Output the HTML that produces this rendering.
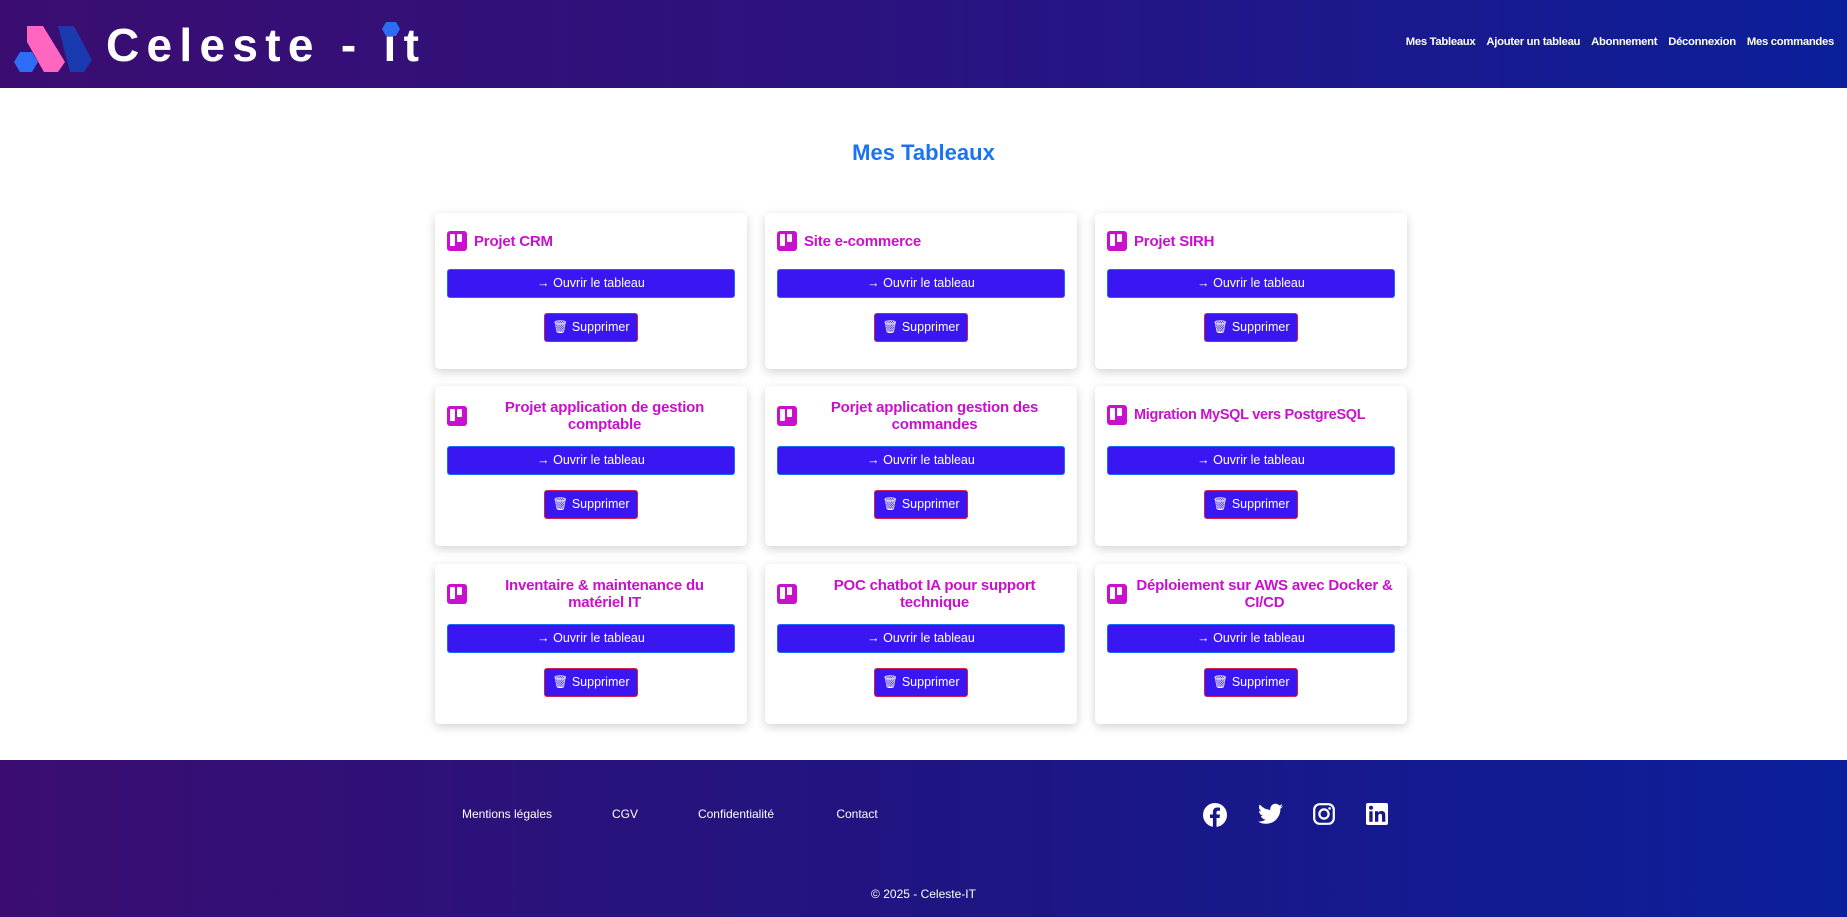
<!DOCTYPE html>
<html><head><meta charset="utf-8"><style>
*{box-sizing:border-box;margin:0;padding:0}
body{width:1847px;height:917px;overflow:hidden;font-family:"Liberation Sans",Arial,sans-serif;background:#fff;position:relative}
header{position:absolute;left:0;top:0;width:1847px;height:88px;background:linear-gradient(90deg,#3b0d71,#2a1380 50%,#0b1f9a)}
.logo{position:absolute;left:14px;top:24px}
.brand{position:absolute;left:106px;top:22px;color:#fff;font-weight:bold;font-size:46px;letter-spacing:7.3px;line-height:46px}
nav{position:absolute;right:13px;top:36px;display:flex;gap:11px;color:#fff;font-weight:bold;font-size:11.3px;letter-spacing:-0.3px}
h1{position:absolute;top:140px;width:100%;text-align:center;color:#1a73f0;font-size:22px;font-weight:bold}
.card{position:absolute;width:312px;background:#fff;border-radius:5px;box-shadow:0 3px 10px rgba(0,0,0,.18)}
.t{position:absolute;left:12px;right:12px;display:flex;align-items:center;color:#c910cc;font-weight:bold;font-size:15px;letter-spacing:-0.2px}
.t svg{flex:none;margin-right:7px}
.t span{flex:1}
.t.c span{text-align:center;padding:0 8px}
.open{position:absolute;left:12px;width:288px;height:29px;background:#3a16f2;border:1px solid #1a6af5;border-radius:3px;color:#fff;font-size:12.5px;text-align:center;line-height:27px}
.del{position:absolute;left:109px;width:94px;height:29px;background:#3a16f2;border:1.5px solid #d3204a;border-radius:3px;color:#fff;font-size:12.5px;text-align:center;line-height:26px}
footer{position:absolute;left:0;top:760px;width:1847px;height:157px;background:linear-gradient(90deg,#3b0d71,#1f1582 50%,#0b1f9a);color:#fff;font-size:12px}
footer .l{position:absolute;top:47px;transform:translateX(-50%)}
footer .ic{position:absolute;top:43px}
footer .cp{position:absolute;top:127px;width:100%;text-align:center}
</style></head><body>
<header>
<svg class="logo" width="80" height="48" viewBox="0 0 80 48">
<polygon points="0,38 6,28 18,28 24,38 18,48 6,48" fill="#2d6cf5"/>
<polygon points="44,2 60,2 78,36 70,48 56,48" fill="#1a3ab0"/>
<polygon points="13,2 29,2 51,38 44,48 30,48 13,18" fill="#ff66c0"/>
</svg>
<div class="brand">Celeste - it</div>
<svg style="position:absolute;left:382px;top:22px" width="18" height="15"><polygon points="4,0 14,0 18,7 14,14 4,14 0,7" fill="#2d6cf5"/></svg>
<nav><span>Mes Tableaux</span><span>Ajouter un tableau</span><span>Abonnement</span><span>Déconnexion</span><span>Mes commandes</span></nav>
</header>
<h1>Mes Tableaux</h1>
<div class="card" style="left:435px;top:213px;height:156px"><div class="t" style="top:18px"><svg width="20" height="20" viewBox="0 0 20 20"><rect width="20" height="20" rx="3" fill="#c910cc"/><rect x="3" y="3" width="5" height="12" rx="1" fill="#fff"/><rect x="10" y="3" width="5" height="8" rx="1" fill="#fff"/></svg><span>Projet CRM</span></div><div class="open" style="top:56px">→ Ouvrir le tableau</div><div class="del" style="top:100px">🗑 Supprimer</div></div>
<div class="card" style="left:765px;top:213px;height:156px"><div class="t" style="top:18px"><svg width="20" height="20" viewBox="0 0 20 20"><rect width="20" height="20" rx="3" fill="#c910cc"/><rect x="3" y="3" width="5" height="12" rx="1" fill="#fff"/><rect x="10" y="3" width="5" height="8" rx="1" fill="#fff"/></svg><span>Site e-commerce</span></div><div class="open" style="top:56px">→ Ouvrir le tableau</div><div class="del" style="top:100px">🗑 Supprimer</div></div>
<div class="card" style="left:1095px;top:213px;height:156px"><div class="t" style="top:18px"><svg width="20" height="20" viewBox="0 0 20 20"><rect width="20" height="20" rx="3" fill="#c910cc"/><rect x="3" y="3" width="5" height="12" rx="1" fill="#fff"/><rect x="10" y="3" width="5" height="8" rx="1" fill="#fff"/></svg><span>Projet SIRH</span></div><div class="open" style="top:56px">→ Ouvrir le tableau</div><div class="del" style="top:100px">🗑 Supprimer</div></div>

<div class="card" style="left:435px;top:386px;height:160px"><div class="t c" style="top:13px"><svg width="20" height="20" viewBox="0 0 20 20"><rect width="20" height="20" rx="3" fill="#c910cc"/><rect x="3" y="3" width="5" height="12" rx="1" fill="#fff"/><rect x="10" y="3" width="5" height="8" rx="1" fill="#fff"/></svg><span>Projet application de gestion comptable</span></div><div class="open" style="top:60px">→ Ouvrir le tableau</div><div class="del" style="top:104px">🗑 Supprimer</div></div>
<div class="card" style="left:765px;top:386px;height:160px"><div class="t c" style="top:13px"><svg width="20" height="20" viewBox="0 0 20 20"><rect width="20" height="20" rx="3" fill="#c910cc"/><rect x="3" y="3" width="5" height="12" rx="1" fill="#fff"/><rect x="10" y="3" width="5" height="8" rx="1" fill="#fff"/></svg><span>Porjet application gestion des commandes</span></div><div class="open" style="top:60px">→ Ouvrir le tableau</div><div class="del" style="top:104px">🗑 Supprimer</div></div>
<div class="card" style="left:1095px;top:386px;height:160px"><div class="t" style="top:19px;font-size:14.5px;letter-spacing:-0.3px"><svg width="20" height="20" viewBox="0 0 20 20"><rect width="20" height="20" rx="3" fill="#c910cc"/><rect x="3" y="3" width="5" height="12" rx="1" fill="#fff"/><rect x="10" y="3" width="5" height="8" rx="1" fill="#fff"/></svg><span style="white-space:nowrap">Migration MySQL vers PostgreSQL</span></div><div class="open" style="top:60px">→ Ouvrir le tableau</div><div class="del" style="top:104px">🗑 Supprimer</div></div>

<div class="card" style="left:435px;top:564px;height:160px"><div class="t c" style="top:13px"><svg width="20" height="20" viewBox="0 0 20 20"><rect width="20" height="20" rx="3" fill="#c910cc"/><rect x="3" y="3" width="5" height="12" rx="1" fill="#fff"/><rect x="10" y="3" width="5" height="8" rx="1" fill="#fff"/></svg><span>Inventaire &amp; maintenance du matériel IT</span></div><div class="open" style="top:60px">→ Ouvrir le tableau</div><div class="del" style="top:104px">🗑 Supprimer</div></div>
<div class="card" style="left:765px;top:564px;height:160px"><div class="t c" style="top:13px"><svg width="20" height="20" viewBox="0 0 20 20"><rect width="20" height="20" rx="3" fill="#c910cc"/><rect x="3" y="3" width="5" height="12" rx="1" fill="#fff"/><rect x="10" y="3" width="5" height="8" rx="1" fill="#fff"/></svg><span>POC chatbot IA pour support technique</span></div><div class="open" style="top:60px">→ Ouvrir le tableau</div><div class="del" style="top:104px">🗑 Supprimer</div></div>
<div class="card" style="left:1095px;top:564px;height:160px"><div class="t c" style="top:13px"><svg width="20" height="20" viewBox="0 0 20 20"><rect width="20" height="20" rx="3" fill="#c910cc"/><rect x="3" y="3" width="5" height="12" rx="1" fill="#fff"/><rect x="10" y="3" width="5" height="8" rx="1" fill="#fff"/></svg><span style="padding:0">Déploiement sur AWS avec Docker &amp; CI/CD</span></div><div class="open" style="top:60px">→ Ouvrir le tableau</div><div class="del" style="top:104px">🗑 Supprimer</div></div>

<footer>
<span class="l" style="left:507px">Mentions légales</span>
<span class="l" style="left:625px">CGV</span>
<span class="l" style="left:736px">Confidentialité</span>
<span class="l" style="left:857px">Contact</span>
<svg class="ic" style="left:1203px" width="24" height="24" viewBox="0 0 24 24"><circle cx="12" cy="12" r="12" fill="#fff"/><path d="M13.5 24V15h3l.5-3.5h-3.5V9.5c0-1 .3-1.7 1.8-1.7H17V4.7c-.3 0-1.4-.2-2.7-.2-2.7 0-4.4 1.6-4.4 4.6v2.4H7V15h2.9v9z" fill="#1b1585"/></svg>
<svg class="ic" style="left:1258px" width="25" height="22" viewBox="0 0 24 20"><path d="M24 2.4c-.9.4-1.8.7-2.8.8 1-.6 1.8-1.6 2.2-2.7-1 .6-2 1-3.1 1.2A4.9 4.9 0 0 0 11.9 6 14 14 0 0 1 1.7.9a4.9 4.9 0 0 0 1.5 6.6c-.8 0-1.6-.3-2.2-.6 0 2.4 1.7 4.4 3.9 4.8-.7.2-1.5.2-2.2.1.6 2 2.4 3.4 4.6 3.4A9.9 9.9 0 0 1 0 17.2 14 14 0 0 0 7.5 19.4c9.1 0 14-7.5 14-14v-.6c1-.7 1.8-1.6 2.5-2.4z" fill="#fff"/></svg>
<svg class="ic" style="left:1313px" width="22" height="22" viewBox="0 0 22 22"><rect x="1.2" y="1.2" width="19.6" height="19.6" rx="5.5" fill="none" stroke="#fff" stroke-width="2.2"/><circle cx="11" cy="11" r="4.6" fill="none" stroke="#fff" stroke-width="2.2"/><circle cx="16.6" cy="5.4" r="1.3" fill="#fff"/></svg>
<svg class="ic" style="left:1366px" width="22" height="22" viewBox="0 0 22 22"><rect width="22" height="22" rx="2" fill="#fff"/><rect x="3.3" y="8.3" width="3.3" height="10.5" fill="#1b1585"/><circle cx="5" cy="4.8" r="2" fill="#1b1585"/><path d="M9 8.3h3.1v1.5c.5-1 1.7-1.8 3.4-1.8 3.3 0 3.8 2.1 3.8 4.9v5.9H16v-5.2c0-1.3 0-2.9-1.7-2.9s-2 1.3-2 2.8v5.3H9z" fill="#1b1585"/></svg>
<div class="cp">© 2025 - Celeste-IT</div>
</footer>
</body></html>
